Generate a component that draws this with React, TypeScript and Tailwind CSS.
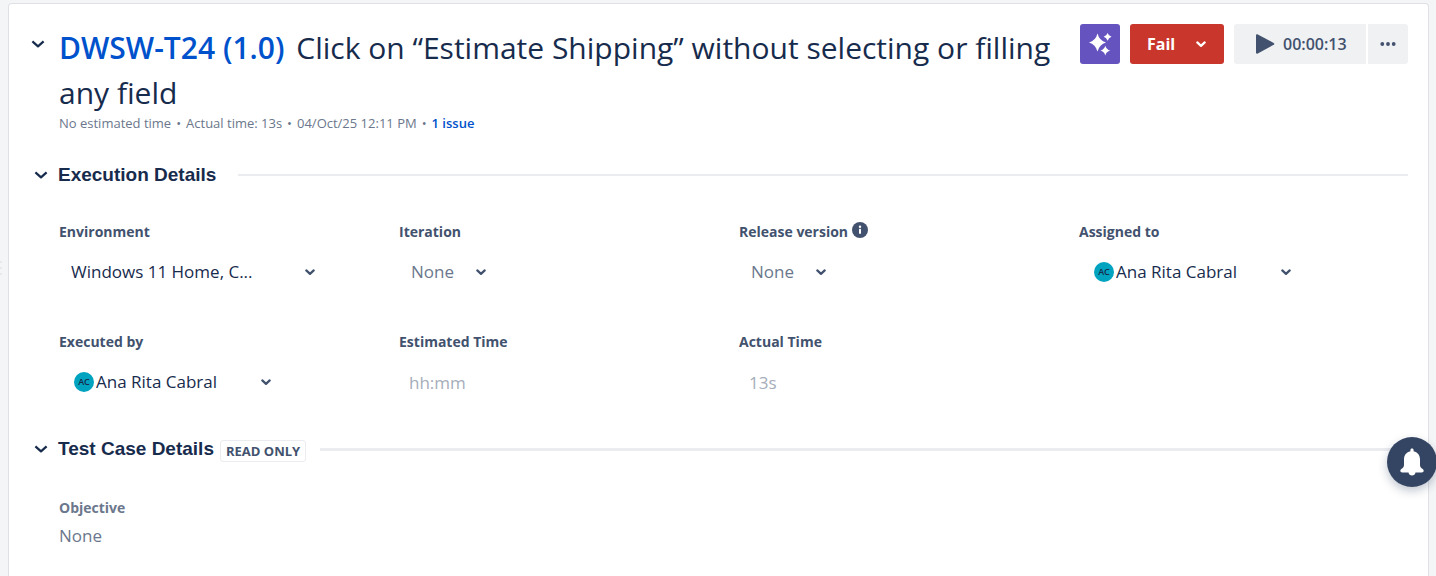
import { useState, type ReactNode } from "react";

function Chevron({ className }: { className: string }) {
  return (
    <svg viewBox="0 0 14 8" fill="none" stroke="currentColor" className={className} aria-hidden="true">
      <path d="M1.4 1.4 7 6.4l5.6-5" strokeWidth="2.2" strokeLinejoin="round" />
    </svg>
  );
}

function SmallChevron({ className = "" }: { className?: string }) {
  return (
    <svg
      viewBox="0 0 10 7"
      fill="none"
      stroke="currentColor"
      strokeWidth="2.2"
      strokeLinecap="round"
      strokeLinejoin="round"
      className={`pointer-events-none h-[7px] w-[10px] shrink-0 ${className}`}
      aria-hidden="true"
    >
      <path d="M1.3 1.4 5 4.9l3.7-3.5" />
    </svg>
  );
}

function Select({
  id,
  options,
  className,
}: {
  id: string;
  options: string[];
  className: string;
}) {
  return (
    <div className="grid items-center">
      <select
        id={id}
        className={`col-start-1 row-start-1 h-10 cursor-pointer appearance-none rounded-[3px] bg-transparent text-[17px] ${className}`}
      >
        {options.map((option) => (
          <option key={option}>{option}</option>
        ))}
      </select>
      <SmallChevron className="col-start-1 row-start-1 mr-2 justify-self-end text-[#42526e]" />
    </div>
  );
}

function PersonSelect({ id }: { id: string }) {
  return (
    <div className="flex items-center pl-[15px]">
      <span className="flex size-5 items-center justify-center rounded-full bg-[#00a3bf] text-[9px] font-semibold text-[#172b4d]">
        AC
      </span>
      <Select id={id} options={["Ana Rita Cabral"]} className="w-[185px] pl-[2px] text-[#172b4d]" />
    </div>
  );
}

function Field({
  id,
  label,
  hint,
  children,
}: {
  id: string;
  label: string;
  hint?: ReactNode;
  children: ReactNode;
}) {
  return (
    <div className="flex flex-col items-start">
      <div className="mb-[10px] flex h-5 items-center gap-1">
        <label htmlFor={id} className="text-sm font-bold text-[#42526e]">
          {label}
        </label>
        {hint}
      </div>
      {children}
    </div>
  );
}

function InfoIcon() {
  return (
    <svg viewBox="0 0 16 16" className="mb-1 size-4" role="img" aria-label="Info">
      <circle cx="8" cy="8" r="8" fill="#42526e" />
      <circle cx="8" cy="4.7" r="1.2" fill="#fff" />
      <rect x="7" y="6.8" width="2" height="5" rx="0.6" fill="#fff" />
    </svg>
  );
}

export default function App() {
  const [running, setRunning] = useState(false);

  return (
    <div className="flex min-h-screen bg-[#f4f5f7] pt-[3px] pr-[7px] font-['Open_Sans','Noto_Sans',sans-serif] text-[#172b4d]">
      <div className="flex w-2 shrink-0 flex-col items-start gap-1 pt-[258px]" aria-hidden="true">
        <span className="size-[2px] bg-[#e6e8ec]" />
        <span className="size-[2px] bg-[#e6e8ec]" />
        <span className="size-[2px] bg-[#e6e8ec]" />
      </div>

      <main className="min-w-0 flex-1 rounded-t-[4px] border border-b-0 border-[#dfe1e6] bg-white">
        <header className="flex items-start pt-5 pr-5 pl-[22px]">
          <button type="button" aria-label="Collapse" className="mt-4 mr-[14px] shrink-0">
            <Chevron className="h-2 w-[14px]" />
          </button>
          <div className="min-w-0 flex-1 pt-px">
            <h1 className="text-[30px] leading-[45px] font-normal">
              <a href="#test-case" className="mr-1 font-semibold text-[#0052cc]">
                DWSW-T24 (1.0)
              </a>{" "}
              <span>Click on “Estimate Shipping” without selecting or filling any field</span>
            </h1>
            <p className="flex flex-wrap gap-x-[5px] text-[13px] leading-4 text-[#6b778c]">
              <span>No estimated time</span>
              <span>•</span>
              <span>Actual time: 13s</span>
              <span>•</span>
              <span>04/Oct/25 12:11 PM</span>
              <span>•</span>
              <a href="#issues" className="font-semibold text-[#0052cc]">
                1 issue
              </a>
            </p>
          </div>
          <div className="ml-5 flex shrink-0 gap-[10px]">
            <button
              type="button"
              aria-label="Assist"
              className="flex size-10 items-center justify-center rounded-[3px] bg-[#6554c0]"
            >
              <svg viewBox="0 0 24 24" fill="#fff" className="size-6" aria-hidden="true">
                <path d="M9.5 1.4Q11.400 8.600 18 10.500 11.400 12.400 9.500 19.600 7.600 12.400 1 10.500 7.600 8.600 9.500 1.400Z" />
                <path d="M19.600 .900Q20.600 3.900 23.500 4.800 20.600 5.700 19.600 8.700 18.600 5.700 15.700 4.800 18.600 3.900 19.600 .900Z" />
                <path d="M17.300 13.800Q18.400 17.600 22.200 18.600 18.400 19.600 17.300 23.400 16.200 19.600 12.400 18.600 16.200 17.600 17.300 13.800Z" />
              </svg>
            </button>
            <div className="grid items-center rounded-[3px] bg-[#c9372c] text-white">
              <select
                aria-label="Status"
                className="col-start-1 row-start-1 h-10 w-[94px] cursor-pointer appearance-none bg-transparent pl-[17px] text-[16px] font-bold"
              >
                <option>Fail</option>
              </select>
              <SmallChevron className="col-start-1 row-start-1 mr-[18px] justify-self-end" />
            </div>
            <div className="flex gap-[2px]">
              <button
                type="button"
                aria-pressed={running}
                onClick={() => setRunning(!running)}
                className="flex h-10 w-[132px] items-center gap-2 rounded-l-[3px] bg-[#f0f1f3] pl-[21px] text-[16px] font-semibold text-[#42526e]"
              >
                <svg viewBox="0 0 20 20" fill="currentColor" className="size-5 shrink-0" aria-hidden="true">
                  <path d="M1 1.4C1 .3 2 0 2.8.4L18.7 9c.8.5.8 1.3 0 1.8L2.8 19.6C2 20 1 19.7 1 18.6Z" />
                </svg>
                00:00:13
              </button>
              <button
                type="button"
                aria-label="More actions"
                className="flex size-10 items-center justify-center rounded-r-[3px] bg-[#f0f1f3] text-[#42526e]"
              >
                <svg viewBox="0 0 16 4" fill="currentColor" className="h-1 w-4" aria-hidden="true">
                  <circle cx="2.3" cy="2" r="1.9" />
                  <circle cx="8" cy="2" r="1.9" />
                  <circle cx="13.7" cy="2" r="1.9" />
                </svg>
              </button>
            </div>
          </div>
        </header>

        <section className="pt-8">
          <div className="flex h-6 items-center pr-5 pl-[25px]">
            <button type="button" aria-label="Toggle execution details" className="mr-[10px]">
              <Chevron className="h-2 w-[14px]" />
            </button>
            <h2 className="font-['Liberation_Sans',Arial,sans-serif] text-[19px] leading-6 font-bold">
              Execution Details
            </h2>
            <div className="ml-[22px] h-[2px] flex-1 bg-[#ebecf0]" />
          </div>

          <div className="grid grid-cols-4 gap-y-10 pt-[35px] pr-[9px] pl-[50px]">
            <Field id="environment" label="Environment">
              <Select
                id="environment"
                options={["Windows 11 Home, C..."]}
                className="w-[264px] pl-3 text-[#172b4d]"
              />
            </Field>
            <Field id="iteration" label="Iteration">
              <Select id="iteration" options={["None"]} className="w-[95px] pl-3 text-[#6b778c]" />
            </Field>
            <Field id="release" label="Release version" hint={<InfoIcon />}>
              <Select id="release" options={["None"]} className="w-[95px] pl-3 text-[#6b778c]" />
            </Field>
            <Field id="assigned" label="Assigned to">
              <PersonSelect id="assigned" />
            </Field>
            <Field id="executed" label="Executed by">
              <PersonSelect id="executed" />
            </Field>
            <Field id="estimated" label="Estimated Time">
              <input
                id="estimated"
                placeholder="hh:mm"
                className="h-10 w-40 bg-transparent pl-[10px] text-[17px] placeholder:text-[#a5adba]"
              />
            </Field>
            <Field id="actual" label="Actual Time">
              <input
                id="actual"
                placeholder="13s"
                className="h-10 w-40 bg-transparent pl-[10px] text-[17px] placeholder:text-[#a5adba]"
              />
            </Field>
          </div>
        </section>

        <section className="pt-[35px]">
          <div className="flex h-6 items-center pr-5 pl-[25px]">
            <button type="button" aria-label="Toggle test case details" className="mr-[10px]">
              <Chevron className="h-2 w-[14px]" />
            </button>
            <h2 className="font-['Liberation_Sans',Arial,sans-serif] text-[19px] leading-6 font-bold">
              Test Case Details
            </h2>
            <span className="mt-1 ml-[6px] rounded-[3px] border border-[#ebecf0] px-[5px] text-[13px] leading-5 font-bold text-[#42526e]">
              READ ONLY
            </span>
            <div className="ml-[14px] h-[3px] flex-1 bg-[#ebecf0]" />
          </div>
          <div className="pt-[37px] pl-[50px] text-[#6b778c]">
            <h3 className="text-sm leading-5 font-bold">Objective</h3>
            <p className="mt-[6px] text-[17px] leading-6">None</p>
          </div>
        </section>
      </main>

      <button
        type="button"
        aria-label="Notifications"
        className="fixed -right-px bottom-[89px] flex size-[50px] items-center justify-center rounded-full bg-[#344563] shadow-[0_4px_10px_rgba(9,30,66,0.25)]"
      >
        <svg viewBox="0 0 24 28" fill="#fff" className="h-7 w-6" aria-hidden="true">
          <path d="M12 .5c1 0 1.600.7 1.600 1.600v1.200c4 .9 6.400 4 6.400 8.200v5.500c0 1.700 1 2.900 2.700 4.100 1.700 1.200 1 3.400-1 3.400H15.500c-.3 1.800-1.600 3-3.500 3s-3.200-1.200-3.500-3H2.300c-2 0-2.700-2.200-1-3.400C3 19.900 4 18.700 4 17v-5.500c0-4.200 2.400-7.300 6.400-8.200V2.100C10.400 1.200 11 .5 12 .5Z" />
        </svg>
      </button>
    </div>
  );
}
